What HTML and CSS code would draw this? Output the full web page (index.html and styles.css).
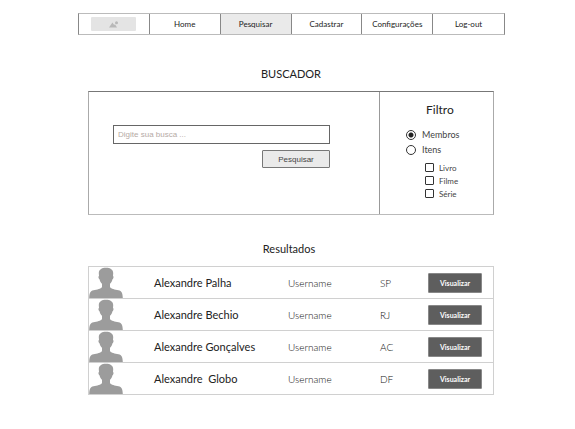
FILE: index.html
```html
<!DOCTYPE html>
<html lang="pt-BR">
<head>
<meta charset="utf-8">
<meta name="viewport" content="width=device-width, initial-scale=1">
<title>Buscador</title>
<link rel="stylesheet" href="styles.css">
</head>
<body>
<svg class="defs" width="0" height="0" aria-hidden="true">
  <symbol id="person" viewBox="0 0 34 31">
    <path d="M17 .8c4.400 0 7.200 2 7.200 5.400l-.2 2.800c.9.300.7 2.700-.6 3.400-.5 2-1.300 3.300-2.400 4.400v3.200c1.200 2 4.800 2.400 8.500 3.300 3.200.8 4.100 2.700 4.300 7.700H.2c.2-5 1.100-6.900 4.300-7.700 3.700-.9 7.300-1.300 8.500-3.300v-3.200c-1.100-1.100-1.900-2.400-2.400-4.400-1.300-.7-1.500-3.100-.6-3.400l-.2-2.800C9.800 2.800 12.600.8 17 .8z"/>
  </symbol>
</svg>
<div class="page">
  <nav class="nav">
    <a class="nav-item" href="#" aria-label="Logo">
      <span class="logo">
        <svg width="10" height="7" viewBox="0 0 10 7" aria-hidden="true"><path d="M0 6.500 3.400 1.500 5.200 4 6 3.200 8 6.500z"/><circle cx="7.500" cy="1.700" r="1.500"/></svg>
      </span>
    </a>
    <a class="nav-item" href="#">Home</a>
    <a class="nav-item active" href="#" aria-current="page">Pesquisar</a>
    <a class="nav-item" href="#">Cadastrar</a>
    <a class="nav-item" href="#">Configurações</a>
    <a class="nav-item" href="#">Log-out</a>
  </nav>
  <main class="content">
    <h1 class="title">BUSCADOR</h1>
    <form class="panel">
      <div class="search">
        <input class="search-input" type="text" placeholder="Digite sua busca ..." aria-label="Busca">
        <button class="search-button" type="button">Pesquisar</button>
      </div>
      <fieldset class="filter">
        <legend class="filter-title">Filtro</legend>
        <label class="option"><input class="radio" type="radio" name="tipo" checked>Membros</label>
        <label class="option"><input class="radio" type="radio" name="tipo">Itens</label>
        <div class="suboptions">
          <label class="suboption"><input class="check" type="checkbox">Livro</label>
          <label class="suboption"><input class="check" type="checkbox">Filme</label>
          <label class="suboption"><input class="check" type="checkbox">Série</label>
        </div>
      </fieldset>
    </form>
    <h2 class="subtitle">Resultados</h2>
    <table class="results">
      <tbody>
        <tr><td class="photo"><svg class="person" aria-hidden="true"><use href="#person"/></svg></td><td class="name">Alexandre Palha</td><td class="user">Username</td><td class="state">SP</td><td class="action"><button class="view" type="button">Visualizar</button></td></tr>
        <tr><td class="photo"><svg class="person" aria-hidden="true"><use href="#person"/></svg></td><td class="name">Alexandre Bechio</td><td class="user">Username</td><td class="state">RJ</td><td class="action"><button class="view" type="button">Visualizar</button></td></tr>
        <tr><td class="photo"><svg class="person" aria-hidden="true"><use href="#person"/></svg></td><td class="name">Alexandre Gonçalves</td><td class="user">Username</td><td class="state">AC</td><td class="action"><button class="view" type="button">Visualizar</button></td></tr>
        <tr><td class="photo"><svg class="person" aria-hidden="true"><use href="#person"/></svg></td><td class="name name-spaced">Alexandre  Globo</td><td class="user">Username</td><td class="state">DF</td><td class="action"><button class="view" type="button">Visualizar</button></td></tr>
      </tbody>
    </table>
  </main>
</div>
</body>
</html>
```
FILE: styles.css
```css
* {
  box-sizing: border-box;
}

body {
  margin: 0;
  background: #fff;
  color: #222;
  font-family: Lato, "Liberation Sans", sans-serif;
  font-size: 8px;
}

.defs {
  position: absolute;
}

.page {
  padding: 13px 70px 24px 78px;
}

.nav {
  display: grid;
  grid-template-columns: repeat(6, 1fr);
  border: 1px solid #888;
  border-top-color: #bbb;
  border-bottom-color: #bbb;
}

.nav-item {
  display: flex;
  align-items: center;
  justify-content: center;
  height: 20px;
  color: #222;
  text-decoration: none;
}

.nav-item:not(:last-child) {
  border-right: 1px solid #888;
}

.nav-item.active {
  background: #eaeaea;
}

.logo {
  display: flex;
  align-items: center;
  justify-content: center;
  width: 45px;
  height: 14px;
  border-radius: 1px;
  background: #e4e4e4;
  fill: #b8b8b8;
}

.content {
  padding: 0 11px 0 10px;
}

.title,
.subtitle {
  margin: 0;
  font-size: 11px;
  font-weight: 400;
  line-height: 16px;
  text-align: center;
}

.title {
  padding: 31px 0 9px;
}

.subtitle {
  padding: 26px 4px 9px 0;
}

.panel {
  display: grid;
  grid-template-columns: 1fr 114px;
  min-height: 124px;
  border: 1px solid #aaa;
  border-top-color: #777;
  border-bottom-color: #bbb;
}

.search {
  display: flex;
  flex-direction: column;
  align-items: flex-end;
  gap: 6px;
  padding: 33px 49px 0 24px;
}

.search-input {
  width: 100%;
  height: 19px;
  padding: 0 4px;
  border: 1px solid #666;
  background: #fff;
  font: 8px "Liberation Sans", sans-serif;
}

.search-input::placeholder {
  color: #b5aaa5;
  opacity: 1;
}

.search-button {
  width: 68px;
  height: 18px;
  padding: 0;
  border: 1px solid #777;
  border-radius: 1px;
  background: #eaeaea;
  color: #444;
  font: 8px "Liberation Sans", sans-serif;
}

.filter {
  min-width: 0;
  margin: 0;
  padding: 0 0 0 26px;
  border: 0;
  border-left: 1px solid #999;
}

.filter-title {
  float: left;
  width: 100%;
  margin-bottom: 9px;
  padding: 10px 20px 0;
  font-size: 12px;
  line-height: 16px;
}

.option {
  display: flex;
  clear: both;
  align-items: center;
  gap: 6px;
  height: 15px;
  color: #444;
  font-size: 9px;
}

.radio,
.check {
  flex: none;
  margin: 0;
  border: 1px solid #333;
  background: #fff;
  appearance: none;
}

.radio {
  width: 10px;
  height: 10px;
  border-radius: 50%;
}

.radio:checked {
  background: radial-gradient(circle, #222 2px, #fff 3px);
}

.check {
  width: 9px;
  height: 9px;
  border-radius: 1px;
}

.suboptions {
  padding: 4px 0 0 19px;
}

.suboption {
  display: flex;
  align-items: center;
  gap: 5px;
  height: 13px;
  color: #444;
}

.results {
  width: 100%;
  border: 1px solid #d0d0d0;
  border-collapse: separate;
  border-spacing: 0;
  table-layout: fixed;
}

.results td {
  height: 32px;
  padding: 0;
  border-bottom: 1px solid #d0d0d0;
}

.results tr:last-child td {
  height: 31px;
  border-bottom: 0;
}

.results .photo {
  width: 64px;
}

.person {
  display: block;
  width: 34px;
  height: 31px;
  fill: #9c9c9c;
}

.results .name {
  padding-left: 1px;
  font-size: 11px;
}

.results .name-spaced {
  white-space: pre;
}

.user {
  width: 92px;
  color: #111;
  font-size: 10px;
  font-weight: 300;
}

.state {
  width: 48px;
  color: #111;
  font-size: 10px;
  font-weight: 300;
}

.action {
  width: 65px;
}

.view {
  display: block;
  width: 54px;
  height: 20px;
  padding: 0;
  border: 1px solid #888;
  border-radius: 1px;
  background: #5e5e5e;
  color: #fff;
  font: 700 7px Lato, "Liberation Sans", sans-serif;
}
```
